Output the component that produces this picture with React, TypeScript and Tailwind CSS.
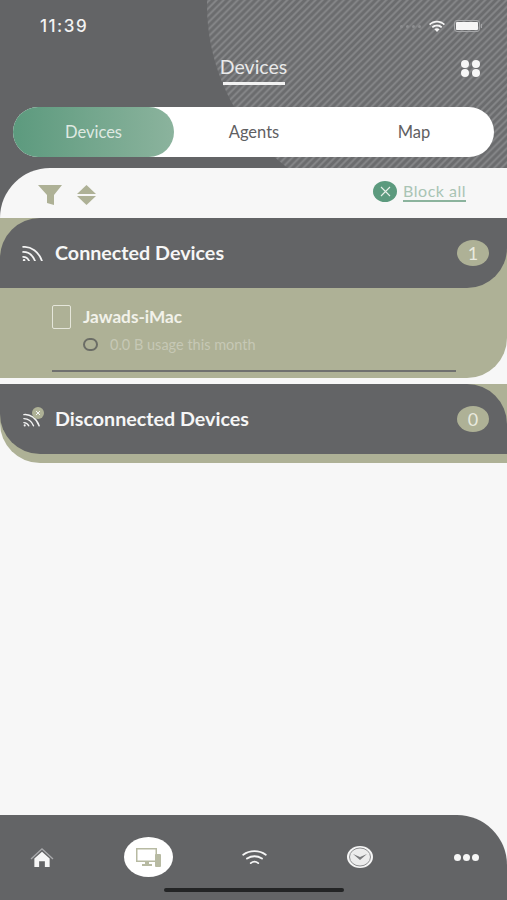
const sans = "font-['Lato','Open_Sans',sans-serif]";

function Tab({ label, active, width }: { label: string; active?: boolean; width: string }) {
  return (
    <div
      className={
        active
          ? `flex h-full items-center justify-center rounded-full bg-gradient-to-r from-[#5c9a7e] to-[#8bb39d] pt-[1px] text-[16.5px] text-[#dfe9e2] ${width}`
          : `flex h-full items-center justify-center pt-[1px] text-[16.5px] text-[#5f6062] ${width}`
      }
    >
      {label}
    </div>
  );
}

function Badge({ n }: { n: number }) {
  return (
    <span className="flex h-[26px] w-[32px] items-center justify-center rounded-[50%] bg-[#aeb196] text-[18px] text-[#e9eadf]">
      {n}
    </span>
  );
}

function RssIcon({ size = 21 }: { size?: number }) {
  return (
    <svg width={size} height={size * 0.8} viewBox="0 0 21 17" fill="none" stroke="#f4f4f4" strokeWidth="1.8" strokeLinecap="round">
      <path d="M1 2c8-1 16 5 19 14" />
      <path d="M1 7c6 0 10 4 12 9" />
      <path d="M1 12c3 0 5 2 6 4" />
      <circle cx="2" cy="15.500" r="1.300" fill="#f4f4f4" stroke="none" />
    </svg>
  );
}

export default function App() {
  return (
    <div className={`relative flex h-[900px] w-[507px] flex-col overflow-hidden bg-[#f7f7f7] ${sans}`}>
      <div className="relative h-[168px] shrink-0 overflow-hidden bg-[#636466]">
        {/* hatched circle in the corner */}
        <div className="absolute left-[207px] top-[-200px] h-[410px] w-[410px] rounded-full bg-[repeating-linear-gradient(135deg,#6b6c6e_0px,#6b6c6e_1.500px,#858688_3px,#858688_3.500px,#6b6c6e_5px)]" />

        <div className="relative flex h-[52px] items-center justify-between pl-[40px] pr-[25px]">
          <span className="pt-[1px] font-['Inter',sans-serif] text-[17px] font-medium tracking-[1.500px] text-[#f2f2f2]">11:39</span>
          <div className="flex items-center">
            <div className="mr-[6px] flex gap-[3px]">
              <span className="h-[3px] w-[3px] rounded-full bg-[#8d8e90]" />
              <span className="h-[3px] w-[3px] rounded-full bg-[#8d8e90]" />
              <span className="h-[3px] w-[3px] rounded-full bg-[#8d8e90]" />
              <span className="h-[3px] w-[3px] rounded-full bg-[#8d8e90]" />
            </div>
            <svg width="20" height="13" viewBox="0 0 18 13" fill="#f6f6f6">
              <path d="M9 2.600c2.600 0 5 1 6.800 2.700l1.200-1.300C14.900 1.900 12 .7 9 .7S3.100 1.900 1 4l1.200 1.300C4 3.600 6.400 2.600 9 2.600z" />
              <path d="M9 6.400c1.600 0 3 .6 4.100 1.600l1.200-1.300C12.900 5.400 11 4.600 9 4.600s-3.900.8-5.300 2.100L4.900 8C6 7 7.400 6.400 9 6.400z" />
              <path d="M9 8.300c-1 0-1.900.4-2.600 1L9 12l2.600-2.700c-.7-.6-1.600-1-2.600-1z" />
            </svg>
            <div className="ml-[7px] flex items-center gap-[1px]">
              <div className="rounded-[3px] border border-[#a5a6a8] p-[1px]">
                <div className="h-[8px] w-[22px] rounded-[1px] bg-[#f6f6f6]" />
              </div>
              <div className="h-[4px] w-[1px] bg-[#a5a6a8]" />
            </div>
          </div>
        </div>

        <div className="relative flex justify-center">
          <div className="flex flex-col items-center">
            <span className="-mt-[1px] text-[19.500px] leading-[31px] text-[#e9e9e9]">Devices</span>
            <div className="h-[3px] w-[62px] bg-[#f2f2f2]" />
          </div>
        </div>
        <div className="absolute left-[461px] top-[60px] grid grid-cols-2 gap-x-[3px] gap-y-[1px]">
          <span className="h-[8px] w-[8px] rounded-full bg-[#f6f6f6]" />
          <span className="h-[8px] w-[8px] rounded-full bg-[#f6f6f6]" />
          <span className="h-[8px] w-[8px] rounded-full bg-[#f6f6f6]" />
          <span className="h-[8px] w-[8px] rounded-full bg-[#f6f6f6]" />
        </div>

        <div className="absolute left-[13px] top-[107px] flex h-[50px] w-[481px] rounded-full bg-white">
          <Tab label="Devices" active width="w-[161px]" />
          <Tab label="Agents" width="w-[160px]" />
          <Tab label="Map" width="w-[160px]" />
        </div>
      </div>

      <div className="relative flex-1 bg-[#636466]">
        <div className="h-full rounded-tl-[50px] bg-[#f7f7f7]">
          <div className="flex h-[50px] items-center justify-between pl-[38px] pr-[41px]">
            <div className="mt-[3px] flex items-center gap-[15px]">
              <svg width="24" height="20" viewBox="0 0 24 20" fill="#aeb196">
                <path d="M0 0h24l-8 10v10l-7-2v-8z" />
              </svg>
              <svg width="19" height="20" viewBox="0 0 19 20" fill="#aeb196">
                <path d="M9.500 0l9.500 9H0z" />
                <path d="M9.500 20L19 11H0z" />
              </svg>
            </div>
            <div className="-mt-[3px] flex items-center gap-[6px]">
              <span className="flex h-[21px] w-[24px] items-center justify-center rounded-[50%] bg-[#5c9a7e]">
                <svg width="11" height="11" viewBox="0 0 11 11" stroke="#e8efe9" strokeWidth="1.100">
                  <path d="M1 1l9 9M10 1l-9 9" />
                </svg>
              </span>
              <span className="border-b-2 border-[#8bb39d] text-[16px] leading-[18px] tracking-[0.5px] text-[#a9c4b4]">Block all</span>
            </div>
          </div>

          <div className="rounded-br-[40px] bg-[#aeb196]">
            <div className="flex h-[70px] items-center justify-between rounded-tl-[40px] rounded-br-[40px] bg-[#636466] pl-[22px] pr-[18px]">
              <div className="flex items-center gap-[12px]">
                <RssIcon />
                <span className="text-[19.700px] font-bold text-[#f6f6f6]">Connected Devices</span>
              </div>
              <Badge n={1} />
            </div>
            <div className="h-[90px] pl-[52px] pr-[51px] pt-[16px]">
              <div className="flex items-center gap-[12px]">
                <div className="h-[24px] w-[19px] rounded-[2px] border border-[#e5e6da]" />
                <span className="text-[17.200px] font-bold text-[#f2f2ea]">Jawads-iMac</span>
              </div>
              <div className="ml-[31px] mt-[4px] flex items-center gap-[12px]">
                <div className="h-[13px] w-[15px] rounded-full border-2 border-[#6b6d66]" />
                <span className="text-[14.500px] text-[#c6c8b5]">0.0 B usage this month</span>
              </div>
              <div className="mt-[14px] h-[2px] bg-[#6f706f]" />
            </div>
          </div>

          <div className="mt-[6px] rounded-bl-[40px] bg-[#aeb196] pb-[9px]">
            <div className="flex h-[70px] items-center justify-between rounded-tr-[40px] rounded-bl-[40px] bg-[#636466] pl-[23px] pr-[18px]">
              <div className="flex items-center gap-[15px]">
                <div className="relative mt-[2px]">
                  <RssIcon size={17} />
                  <span className="absolute -right-[4px] -top-[6px] flex h-[12px] w-[12px] items-center justify-center rounded-full bg-[#aeb196]">
                    <svg width="6" height="6" viewBox="0 0 6 6" stroke="#f4f4f4" strokeWidth="1">
                      <path d="M1 1l4 4M5 1L1 5" />
                    </svg>
                  </span>
                </div>
                <span className="text-[19.700px] font-bold text-[#f6f6f6]">Disconnected Devices</span>
              </div>
              <Badge n={0} />
            </div>
          </div>
        </div>
      </div>

      <div className="absolute bottom-0 left-0 h-[85px] w-full rounded-tr-[50px] bg-[#636466]">
        <div className="-ml-[11px] grid grid-cols-[repeat(5,106px)] items-center justify-items-center pt-[22px]">
          <svg width="24" height="21" viewBox="0 0 24 22" fill="#f6f6f6">
            <path d="M12 1L0 12l1 1L12 3l11 10 1-1z" fill="#a9aaac" />
            <path d="M12 5l-8 7v9h5v-6h6v6h5v-9z" />
          </svg>
          <div className="flex h-[40px] w-[49px] items-center justify-center rounded-[50%] bg-white">
            <svg width="25" height="19" viewBox="0 0 25 19" fill="#b7baa2">
              <path d="M0 0h21v14h-8v2h3v2H6v-2h3v-2H0zm1.500 1.500v11h18v-11z" />
              <rect x="19" y="6" width="6" height="13" rx="1" />
            </svg>
          </div>
          <svg width="25" height="15" viewBox="0 0 26 16" fill="none" stroke="#f6f6f6" strokeWidth="2" strokeLinecap="round">
            <path d="M1 5c7-5 17-5 24 0" />
            <path d="M5 9c5-3 11-3 16 0" />
            <path d="M9 14c2.500-2 5.500-2 8 0" />
          </svg>
          <svg width="26" height="22" viewBox="0 0 26 22">
            <ellipse cx="13" cy="11" rx="13" ry="11" fill="#f6f6f6" />
            <ellipse cx="13" cy="11" rx="10.500" ry="9" fill="#ececec" stroke="#8d8e90" strokeWidth="1" />
            <path d="M6 8l7 3 7-3-7 6z" fill="#7a7b7d" />
          </svg>
          <div className="flex gap-[2px]">
            <span className="h-[7px] w-[7px] rounded-full bg-[#f6f6f6]" />
            <span className="h-[7px] w-[7px] rounded-full bg-[#f6f6f6]" />
            <span className="h-[7px] w-[7px] rounded-full bg-[#f6f6f6]" />
          </div>
        </div>
        <div className="absolute bottom-[8px] left-[164px] h-[4px] w-[180px] rounded-full bg-[#232425]" />
      </div>
    </div>
  );
}
